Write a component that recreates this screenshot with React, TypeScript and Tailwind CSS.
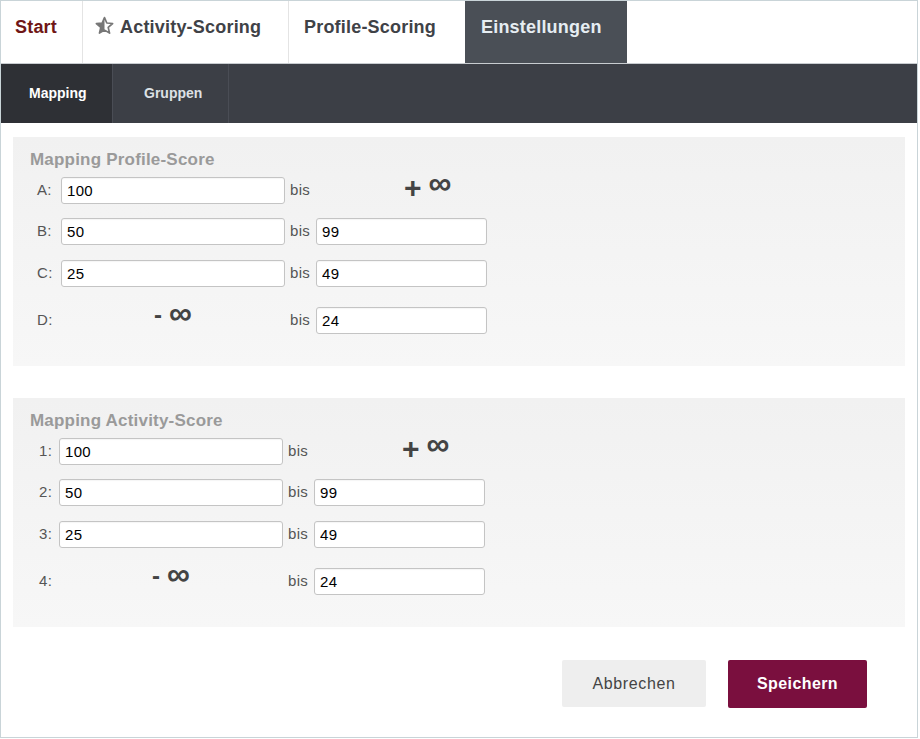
import React from "react";

type Row = { label: string; from: string | null; to: string | null };

const profileRows: Row[] = [
  { label: "A:", from: "100", to: null },
  { label: "B:", from: "50", to: "99" },
  { label: "C:", from: "25", to: "49" },
  { label: "D:", from: null, to: "24" },
];

const activityRows: Row[] = [
  { label: "1:", from: "100", to: null },
  { label: "2:", from: "50", to: "99" },
  { label: "3:", from: "25", to: "49" },
  { label: "4:", from: null, to: "24" },
];

function HalfStar() {
  const d = "M9 1.5 L11.2 6.6 L16.7 7.1 L12.5 10.8 L13.8 16.2 L9 13.4 L4.2 16.2 L5.5 10.8 L1.3 7.1 L6.8 6.6 Z";
  return (
    <svg width="19" height="19" viewBox="0 0 18 18" className="mr-[6px] mt-[2px]">
      <defs>
        <clipPath id="half">
          <rect x="0" y="0" width="9" height="18" />
        </clipPath>
      </defs>
      <path d={d} fill="#777" clipPath="url(#half)" />
      <path d={d} fill="none" stroke="#777" strokeWidth="1.6" strokeLinejoin="round" />
    </svg>
  );
}

function Field({ value, width }: { value: string; width: string }) {
  return (
    <input
      defaultValue={value}
      className={`${width} h-[27px] rounded-[3px] border border-[#c4c4c4] bg-white px-[5px] text-[15px] tracking-[0.3px] text-black outline-none shadow-[inset_0_1px_1px_rgba(0,0,0,0.04)]`}
    />
  );
}

function Panel({ title, rows, labelW }: { title: string; rows: Row[]; labelW: string }) {
  const gaps = ["mt-[7px]", "mt-[14px]", "mt-[15px]", "mt-[20px]"];
  return (
    <div className="mx-[12px] bg-gradient-to-b from-[#f1f1f1] to-[#f7f7f7] pl-[17px] pt-[13px] pb-[32px]">
      <div className="text-[17px] font-bold leading-[20px] tracking-[0.2px] text-[#9a9a9a]">{title}</div>
      {rows.map((r, i) => (
        <div key={r.label} className={`flex h-[27px] items-center ${gaps[i]}`}>
          <span className={`${labelW} shrink-0 text-[15px] tracking-[0.3px] text-[#555]`}>{r.label}</span>
          {r.from !== null ? (
            <Field value={r.from} width="w-[224px]" />
          ) : (
            <div className="flex w-[224px] items-center justify-center pb-[12px] text-[#444]">
              <span className="text-[24px] font-bold leading-none">-</span>
              <span className="-mt-[3px] ml-[7px] text-[32px] font-bold leading-none">∞</span>
            </div>
          )}
          <span className="ml-[5px] w-[26px] shrink-0 text-[15px] tracking-[0.3px] text-[#555]">bis</span>
          {r.to !== null ? (
            <Field value={r.to} width="w-[171px]" />
          ) : (
            <div className="flex w-[171px] items-center pb-[6px] pl-[88px] text-[#444]">
              <span className="text-[30px] font-bold leading-none">+</span>
              <span className="-mt-[10px] ml-[7px] text-[32px] font-bold leading-none">∞</span>
            </div>
          )}
        </div>
      ))}
    </div>
  );
}

export default function App() {
  return (
    <div
      className="h-[738px] w-[918px] overflow-hidden border border-[#c9d4d8] bg-white"
      style={{ fontFamily: '"Liberation Sans", Arial, sans-serif' }}
    >
      {/* top tabs */}
      <div className="flex h-[62px] bg-white">
        <div className="w-[82px] border-r border-[#e4e4e4] pl-[14px] pt-[13px] text-[18px] font-bold tracking-[0.2px] text-[#6f1616]">
          Start
        </div>
        <div className="flex w-[206px] items-start border-r border-[#e4e4e4] pl-[12px] pt-[13px] text-[18px] font-bold tracking-[0.2px] text-[#3f4247]">
          <HalfStar />
          Activity-Scoring
        </div>
        <div className="w-[176px] pl-[15px] pt-[13px] text-[18px] font-bold tracking-[0.2px] text-[#3f4247]">
          Profile-Scoring
        </div>
        <div className="w-[162px] bg-[#4a4f56] pl-[16px] pt-[13px] text-[18px] font-bold tracking-[0.2px] text-[#e6edf2]">
          Einstellungen
        </div>
      </div>

      {/* sub nav */}
      <div className="flex h-[60px] border-t border-[#c8ccd0] bg-[#3c3f46]">
        <div className="flex w-[112px] items-center border-r border-[#4a4d55] bg-[#2e3035] pl-[28px] text-[14px] font-bold text-white">
          Mapping
        </div>
        <div className="flex w-[116px] items-center border-r border-[#4a4d55] pl-[31px] text-[14px] font-bold text-[#dde1e5]">
          Gruppen
        </div>
      </div>

      <div className="pt-[14px]">
        <Panel title="Mapping Profile-Score" rows={profileRows} labelW="w-[31px] pl-[7px]" />
        <div className="h-[32px]" />
        <Panel title="Mapping Activity-Score" rows={activityRows} labelW="w-[29px] pl-[9px]" />
      </div>

      <div className="mt-[33px] flex justify-end gap-[22px] pr-[50px]">
        <button className="h-[47px] w-[144px] rounded-[2px] bg-[#eeeeee] text-[16px] tracking-[0.6px] text-[#444]">
          Abbrechen
        </button>
        <button className="h-[48px] w-[139px] rounded-[2px] bg-[#7a0f3e] text-[16px] font-bold tracking-[0.4px] text-white">
          Speichern
        </button>
      </div>
    </div>
  );
}
